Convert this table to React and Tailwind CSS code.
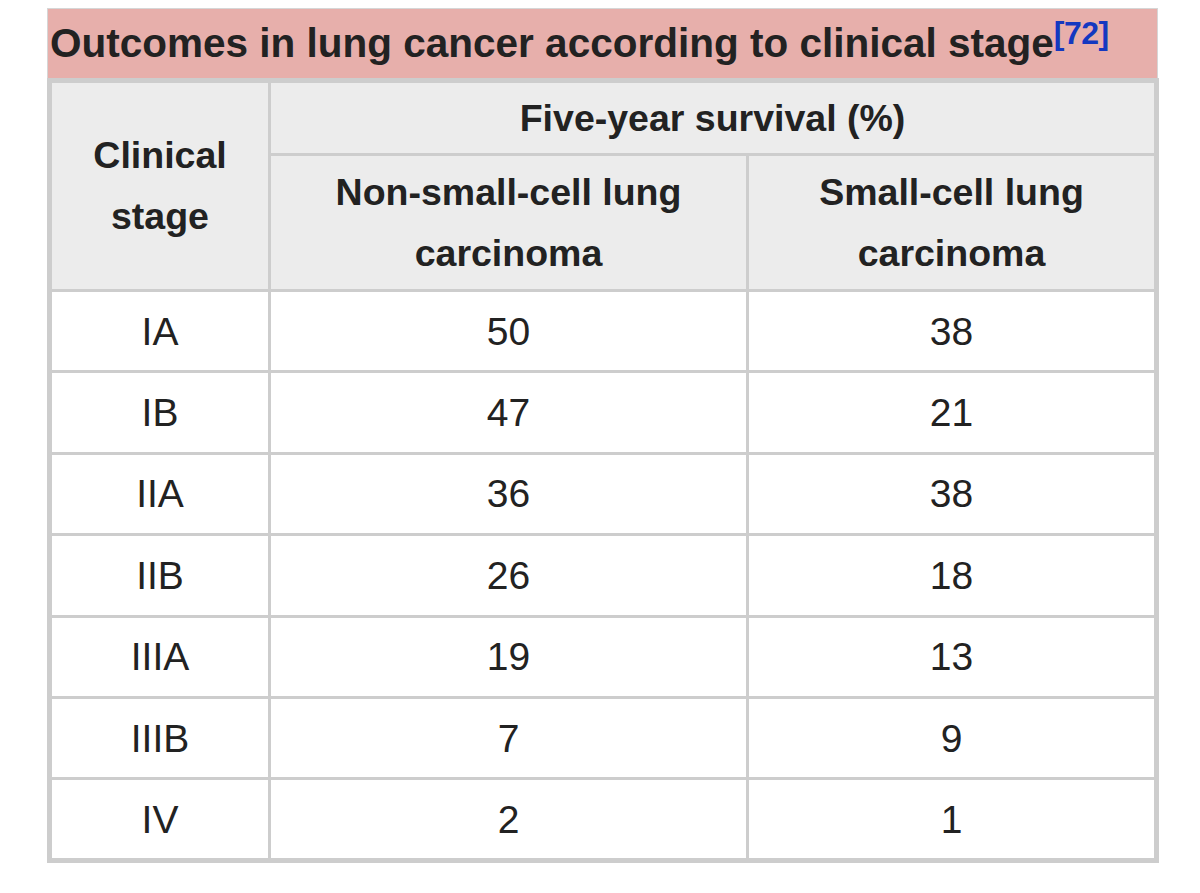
import React from 'react';

const rows = [
  { stage: 'IA', nsclc: 50, sclc: 38 },
  { stage: 'IB', nsclc: 47, sclc: 21 },
  { stage: 'IIA', nsclc: 36, sclc: 38 },
  { stage: 'IIB', nsclc: 26, sclc: 18 },
  { stage: 'IIIA', nsclc: 19, sclc: 13 },
  { stage: 'IIIB', nsclc: 7, sclc: 9 },
  { stage: 'IV', nsclc: 2, sclc: 1 },
];

const font = { fontFamily: '"Liberation Sans", Arial, Helvetica, sans-serif' };

export default function App() {
  return (
    <div className="min-h-screen bg-white pl-[47px] pt-[8px] text-[#222]" style={font}>
      <div className="w-[1111px]">
        {/* Caption */}
        <div className="flex h-[70px] items-center border-x border-t border-[#d6d6d6] bg-[#e7afab] pl-[2px]">
          <span className="text-[40.5px] font-bold leading-none">
            Outcomes in lung cancer according to clinical stage
            <sup className="relative top-[-13px] text-[32px] font-bold tracking-[-0.5px] text-[#1438c0]">[72]</sup>
          </span>
        </div>

        {/* Table */}
        <table className="w-[1107px] table-fixed border-collapse border-[5px] border-[#cdcdcd] text-center">
          <colgroup>
            <col className="w-[220px]" />
            <col className="w-[478px]" />
            <col className="w-[409px]" />
          </colgroup>
          <thead className="bg-[#ececec] text-[37.5px] font-bold leading-[61px]">
            <tr className="h-[74px]">
              <th rowSpan={2} className="border-[3px] border-[#cdcdcd] px-2 font-bold">
                Clinical
                <br />
                stage
              </th>
              <th colSpan={2} className="border-[3px] border-[#cdcdcd] px-2 font-bold">
                Five-year survival (%)
              </th>
            </tr>
            <tr className="h-[136px]">
              <th className="border-[3px] border-[#cdcdcd] px-2 font-bold">
                Non-small-cell lung
                <br />
                carcinoma
              </th>
              <th className="border-[3px] border-[#cdcdcd] px-2 font-bold">
                Small-cell lung
                <br />
                carcinoma
              </th>
            </tr>
          </thead>
          <tbody className="text-[39px] leading-none">
            {rows.map((r) => (
              <tr key={r.stage} className="h-[81.4px]">
                <td className="border-[3px] border-[#cdcdcd]">{r.stage}</td>
                <td className="border-[3px] border-[#cdcdcd]">{r.nsclc}</td>
                <td className="border-[3px] border-[#cdcdcd]">{r.sclc}</td>
              </tr>
            ))}
          </tbody>
        </table>
      </div>
    </div>
  );
}
